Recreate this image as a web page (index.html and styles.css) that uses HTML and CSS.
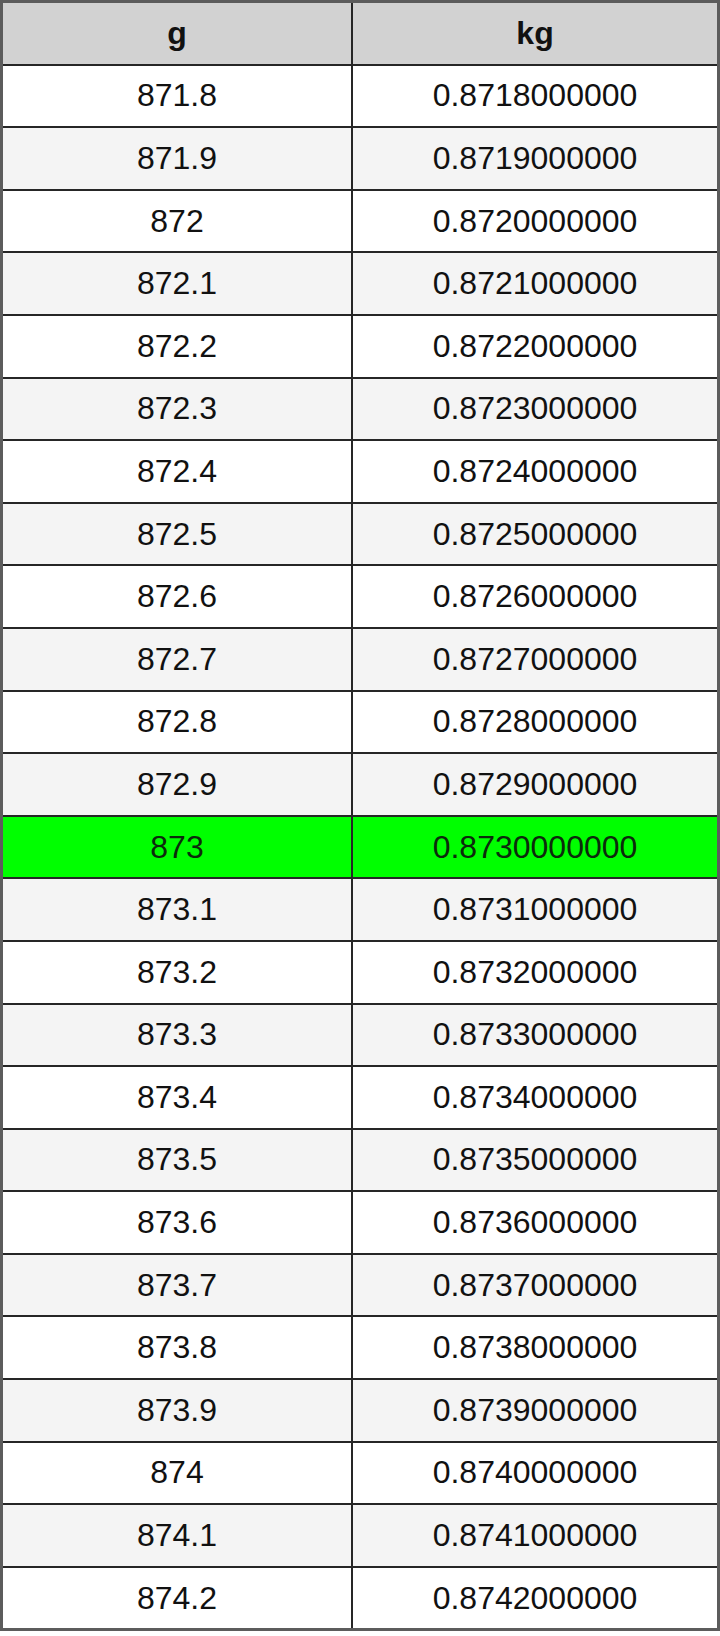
FILE: index.html
```html
<!DOCTYPE html>
<html>
<head>
<meta charset="utf-8">
<link rel="stylesheet" href="styles.css">
</head>
<body>
<table class="conv">
<thead>
<tr><th class="c1">g</th><th class="c2">kg</th></tr>
</thead>
<tbody>
<tr><td>871.8</td><td>0.8718000000</td></tr>
<tr><td>871.9</td><td>0.8719000000</td></tr>
<tr><td>872</td><td>0.8720000000</td></tr>
<tr><td>872.1</td><td>0.8721000000</td></tr>
<tr><td>872.2</td><td>0.8722000000</td></tr>
<tr><td>872.3</td><td>0.8723000000</td></tr>
<tr><td>872.4</td><td>0.8724000000</td></tr>
<tr><td>872.5</td><td>0.8725000000</td></tr>
<tr><td>872.6</td><td>0.8726000000</td></tr>
<tr><td>872.7</td><td>0.8727000000</td></tr>
<tr><td>872.8</td><td>0.8728000000</td></tr>
<tr><td>872.9</td><td>0.8729000000</td></tr>
<tr class="hl"><td>873</td><td>0.8730000000</td></tr>
<tr><td>873.1</td><td>0.8731000000</td></tr>
<tr><td>873.2</td><td>0.8732000000</td></tr>
<tr><td>873.3</td><td>0.8733000000</td></tr>
<tr><td>873.4</td><td>0.8734000000</td></tr>
<tr><td>873.5</td><td>0.8735000000</td></tr>
<tr><td>873.6</td><td>0.8736000000</td></tr>
<tr><td>873.7</td><td>0.8737000000</td></tr>
<tr><td>873.8</td><td>0.8738000000</td></tr>
<tr><td>873.9</td><td>0.8739000000</td></tr>
<tr><td>874</td><td>0.8740000000</td></tr>
<tr><td>874.1</td><td>0.8741000000</td></tr>
<tr><td>874.2</td><td>0.8742000000</td></tr>
</tbody>
</table>
</body>
</html>
```
FILE: styles.css
```css
html, body {
  margin: 0;
  padding: 0;
  background: #ffffff;
}
.conv {
  border-collapse: collapse;
  width: 720px;
  border: 3px solid #5c5c5c;
  font-family: "Liberation Sans", Arial, sans-serif;
  color: #111111;
  table-layout: fixed;
}
.conv th, .conv td {
  border: 2px solid #262626;
  height: 60.6px;
  padding: 0;
  text-align: center;
  vertical-align: middle;
  font-size: 32px;
}
.conv th {
  background: #d2d2d2;
  font-weight: bold;
}
.conv .c1 { width: 348px; }
.conv tbody tr:nth-child(odd) td { background: #ffffff; }
.conv tbody tr:nth-child(even) td { background: #f4f4f4; }
.conv tbody tr.hl td { background: #00ff00; color: #0c2a0c; }
```
